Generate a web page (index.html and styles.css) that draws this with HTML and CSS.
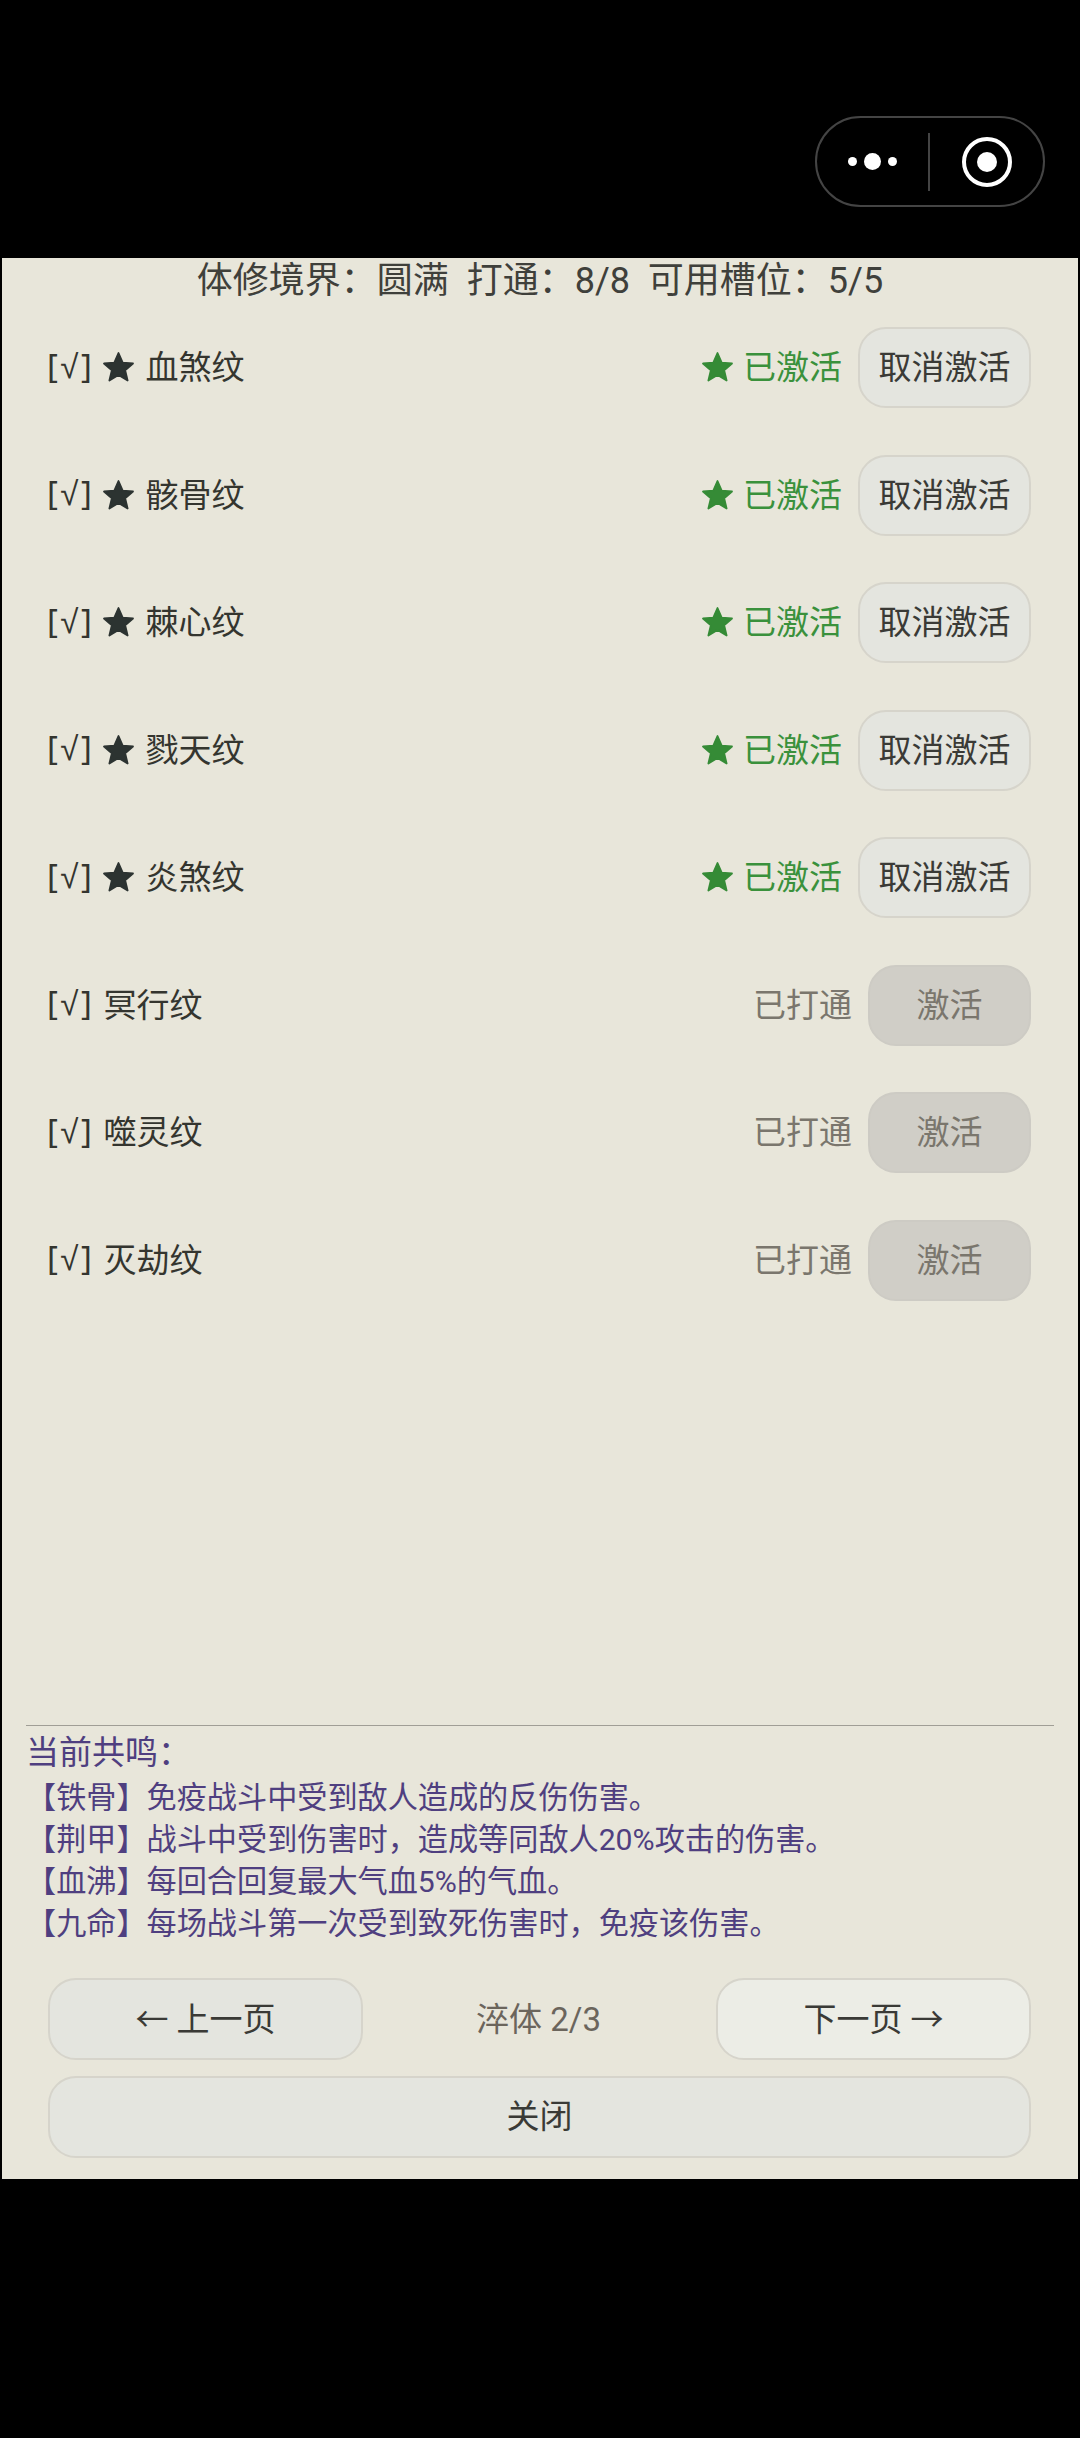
FILE: index.html
```html
<!DOCTYPE html>
<html lang="zh-CN">
<head>
<meta charset="utf-8">
<title>体修境界</title>
<link rel="stylesheet" href="styles.css">
</head>
<body>
<svg class="defs" width="0" height="0" aria-hidden="true"><defs><path id="star" d="M12 2.6l2.7 6.2 6.7.6-5.1 4.4 1.6 6.6L12 16.9l-5.9 3.5 1.6-6.6-5.1-4.4 6.7-.6z"/></defs></svg>
<header class="topbar">
  <div class="capsule">
    <div class="capsule-more"><i class="dot"></i><i class="dot big"></i><i class="dot"></i></div>
    <div class="capsule-sep"></div>
    <div class="capsule-close"><i class="ring-core"></i></div>
  </div>
</header>
<main class="panel">
  <h1 class="summary">体修境界：圆满  打通：8/8  可用槽位：5/5</h1>
  <ul class="list">
    <li class="row"><span class="name"><span class="mark">[√]</span><svg class="star" viewBox="0 0 24 24"><use href="#star"/></svg> 血煞纹</span><span class="status active"><svg class="star" viewBox="0 0 24 24"><use href="#star"/></svg>已激活</span><button class="btn cancel">取消激活</button></li>
    <li class="row"><span class="name"><span class="mark">[√]</span><svg class="star" viewBox="0 0 24 24"><use href="#star"/></svg> 骸骨纹</span><span class="status active"><svg class="star" viewBox="0 0 24 24"><use href="#star"/></svg>已激活</span><button class="btn cancel">取消激活</button></li>
    <li class="row"><span class="name"><span class="mark">[√]</span><svg class="star" viewBox="0 0 24 24"><use href="#star"/></svg> 棘心纹</span><span class="status active"><svg class="star" viewBox="0 0 24 24"><use href="#star"/></svg>已激活</span><button class="btn cancel">取消激活</button></li>
    <li class="row"><span class="name"><span class="mark">[√]</span><svg class="star" viewBox="0 0 24 24"><use href="#star"/></svg> 戮天纹</span><span class="status active"><svg class="star" viewBox="0 0 24 24"><use href="#star"/></svg>已激活</span><button class="btn cancel">取消激活</button></li>
    <li class="row"><span class="name"><span class="mark">[√]</span><svg class="star" viewBox="0 0 24 24"><use href="#star"/></svg> 炎煞纹</span><span class="status active"><svg class="star" viewBox="0 0 24 24"><use href="#star"/></svg>已激活</span><button class="btn cancel">取消激活</button></li>
    <li class="row"><span class="name"><span class="mark">[√]</span> 冥行纹</span><span class="status">已打通</span><button class="btn activate">激活</button></li>
    <li class="row"><span class="name"><span class="mark">[√]</span> 噬灵纹</span><span class="status">已打通</span><button class="btn activate">激活</button></li>
    <li class="row"><span class="name"><span class="mark">[√]</span> 灭劫纹</span><span class="status">已打通</span><button class="btn activate">激活</button></li>
  </ul>
  <section class="resonance">
    <h2 class="res-title">当前共鸣：</h2>
    <p class="res-line">【铁骨】免疫战斗中受到敌人造成的反伤伤害。</p>
    <p class="res-line">【荆甲】战斗中受到伤害时，造成等同敌人20%攻击的伤害。</p>
    <p class="res-line">【血沸】每回合回复最大气血5%的气血。</p>
    <p class="res-line">【九命】每场战斗第一次受到致死伤害时，免疫该伤害。</p>
  </section>
  <nav class="actions">
    <div class="pager">
      <button class="btn page">← 上一页</button>
      <span class="page-label">淬体 2/3</span>
      <button class="btn page next">下一页 →</button>
    </div>
    <button class="btn close">关闭</button>
  </nav>
</main>
</body>
</html>
```
FILE: styles.css
```css
* { box-sizing: border-box; }
html, body { margin: 0; padding: 0; }
body {
  width: 1080px;
  height: 2438px;
  background: #000;
  font-family: Roboto, "Noto Sans CJK SC", sans-serif;
  color: #34352f;
  overflow: hidden;
}
.defs { position: absolute; }
.topbar {
  height: 258px;
  display: flex;
  justify-content: flex-end;
  align-items: flex-start;
  padding: 116px 35px 0 0;
}
.capsule {
  width: 230px;
  height: 91px;
  border: 2px solid #444;
  border-radius: 46px;
  display: flex;
  align-items: center;
}
.capsule-more {
  width: 111px;
  padding-right: 31px;
  display: flex;
  justify-content: flex-end;
  align-items: center;
  gap: 7px;
}
.dot { width: 9px; height: 9px; border-radius: 50%; background: #fff; }
.dot.big { width: 17px; height: 17px; }
.capsule-sep { width: 2px; height: 58px; background: #444; }
.capsule-close {
  width: 50px;
  height: 50px;
  margin-left: 32px;
  border: 4px solid #fff;
  border-radius: 50%;
  display: flex;
  align-items: center;
  justify-content: center;
}
.ring-core { width: 20px; height: 20px; border-radius: 50%; background: #fff; }
.panel {
  width: 1076px;
  height: 1921px;
  margin: 0 2px;
  background: #e8e6da;
  display: flex;
  flex-direction: column;
}
.summary {
  margin: 0;
  height: 42px;
  padding-top: 2px;
  line-height: 42px;
  font-size: 36px;
  font-weight: 400;
  text-align: center;
  white-space: pre;
  color: #3f403b;
}
.list {
  list-style: none;
  margin: 0;
  padding: 27px 47px 0 45px;
  display: flex;
  flex-direction: column;
  gap: 46.5px;
}
.row {
  height: 81px;
  display: flex;
  align-items: center;
  font-size: 33px;
}
.name {
  flex: 1;
  display: flex;
  align-items: center;
  padding-bottom: 5px;
  white-space: pre;
  color: #34352f;
}
.mark { font-family: "Noto Sans", sans-serif; letter-spacing: 2.5px; margin-right: 1px; }
.star {
  width: 37px;
  height: 37px;
  margin-top: 5px;
  fill: #2c3331;
  stroke: #2c3331;
  stroke-width: 1.2;
  stroke-linejoin: round;
}
.name .star { margin-left: 5px; }
.status { margin-right: 16px; padding-bottom: 5px; color: #7a766d; display: flex; align-items: center; }
.status.active { color: #3a913c; }
.status.active .star { fill: #358b36; stroke: #358b36; margin-right: 7px; }
.btn {
  font: inherit;
  height: 81px;
  padding: 0 0 5px;
  border: 2px solid #d6d4cb;
  border-radius: 28px;
  background: #e4e5df;
  color: #3a3a36;
}
.cancel { width: 173px; }
.activate { width: 163px; background: #d0cec7; border-color: #cdcbc4; color: #7a766d; }
.resonance {
  margin: auto 24px 0;
  border-top: 1px solid #a09e96;
  padding-top: 3px;
  color: #4f3f80;
}
.res-title { margin: 0; font-size: 33px; font-weight: 400; line-height: 48px; }
.res-line { margin: 0; font-size: 30.15px; line-height: 42px; white-space: nowrap; }
.actions {
  padding: 33px 47px 21px 46px;
  display: flex;
  flex-direction: column;
  gap: 16px;
  font-size: 33px;
}
.pager { display: flex; align-items: center; justify-content: space-between; }
.page { width: 315px; height: 82px; }
.page.next { background: #ecede6; }
.page-label { color: #6b655c; padding: 0 2px 5px 0; }
.close { width: 100%; height: 82px; padding-bottom: 7px; }
```
